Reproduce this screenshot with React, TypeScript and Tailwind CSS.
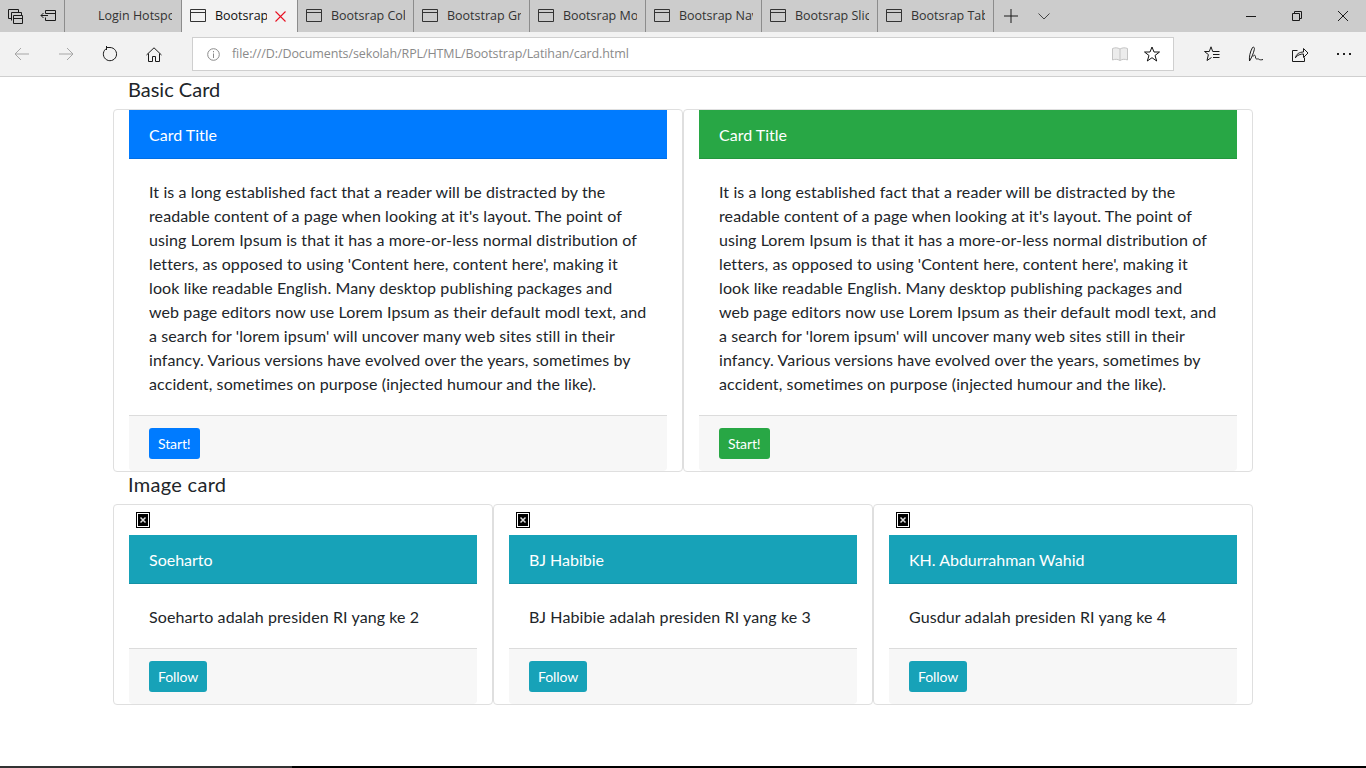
import React from 'react';

const bodyLines = [
  'It is a long established fact that a reader will be distracted by the',
  "readable content of a page when looking at it's layout. The point of",
  'using Lorem Ipsum is that it has a more-or-less normal distribution of',
  "letters, as opposed to using 'Content here, content here', making it",
  'look like readable English. Many desktop publishing packages and',
  'web page editors now use Lorem Ipsum as their default modl text, and',
  "a search for 'lorem ipsum' will uncover many web sites still in their",
  'infancy. Various versions have evolved over the years, sometimes by',
  'accident, sometimes on purpose (injected humour and the like).',
];

const tabs = ['Bootsrap Col', 'Bootstrap Gr', 'Bootsrap Mo', 'Bootsrap Nav', 'Bootsrap Slic', 'Bootsrap Tab'];

const people = [
  { name: 'Soeharto', text: 'Soeharto adalah presiden RI yang ke 2' },
  { name: 'BJ Habibie', text: 'BJ Habibie adalah presiden RI yang ke 3' },
  { name: 'KH. Abdurrahman Wahid', text: 'Gusdur adalah presiden RI yang ke 4' },
];

function Icon({ children, w = 16, h = 16, color = '#1a1a1a' }: { children: React.ReactNode; w?: number; h?: number; color?: string }) {
  return (
    <svg width={w} height={h} viewBox={`0 0 ${w} ${h}`} fill="none" stroke={color} strokeWidth="1">
      {children}
    </svg>
  );
}

function TabIcon() {
  return (
    <Icon w={16} h={14} color="#333">
      <path d="M0.5 0.5h15v12h-15z M0.5 3.5h15" />
    </Icon>
  );
}

function Tab({ label }: { label: string }) {
  return (
    <div className="w-[116px] h-8 flex items-center pl-[8px] border-r border-[#8c8c8c] shrink-0">
      <TabIcon />
      <div className="ml-[9px] w-[74px] overflow-hidden whitespace-nowrap text-[12.5px] text-[#333]">{label}</div>
    </div>
  );
}

function Browser() {
  return (
    <div className="font-['Open_Sans',sans-serif]">
      <div className="h-8 bg-[#cccccc] flex items-center">
        <div className="w-8 flex justify-center">
          <Icon w={16} h={15}>
            <path d="M0.5 0.5h10v3M0.5 0.5v9h3 M3.5 3.5h10v3M3.5 3.5v8 M5.5 6.5h9v8h-9z M5.5 9.5h9" />
          </Icon>
        </div>
        <div className="w-8 flex justify-center">
          <Icon w={16} h={12}>
            <path d="M5.5 0.5h10v10h-10v-3 M5.5 3.5v-3 M5.5 3.5h10 M8 5.5h-7 M3.5 3l-2.5 2.5l2.5 2.5" />
          </Icon>
        </div>
        <div className="w-[118px] h-8 flex items-center border-x border-[#8c8c8c] pl-[33px] shrink-0">
          <div className="w-[74px] overflow-hidden whitespace-nowrap text-[12.5px] text-[#333]">Login Hotspot</div>
        </div>
        <div className="w-[116px] h-8 flex items-center pl-[8px] bg-[#f2f2f2] border-r border-[#8c8c8c] shrink-0">
          <TabIcon />
          <div className="ml-[9px] w-[52px] overflow-hidden whitespace-nowrap text-[12.5px] text-[#111]">Bootsrap</div>
          <svg className="ml-[8px]" width="11" height="11" viewBox="0 0 11 11" stroke="#e81123" strokeWidth="1.1">
            <path d="M0.5 0.5l10 10M10.5 0.5l-10 10" />
          </svg>
        </div>
        {tabs.map((t) => (
          <Tab key={t} label={t} />
        ))}
        <div className="w-[34px] flex justify-center">
          <Icon w={14} h={14}>
            <path d="M7 0v14M0 7h14" />
          </Icon>
        </div>
        <div className="w-[32px] flex justify-center">
          <Icon w={12} h={7} color="#444">
            <path d="M0.5 0.5l5.5 5.5l5.5-5.5" />
          </Icon>
        </div>
        <div className="ml-auto flex">
          <div className="w-[46px] flex justify-center">
            <Icon w={10} h={10}>
              <path d="M0 5.5h10" />
            </Icon>
          </div>
          <div className="w-[46px] flex justify-center">
            <Icon w={10} h={10}>
              <path d="M0.5 2.5h7v7h-7z M2.5 2.5v-2h7v7h-2" />
            </Icon>
          </div>
          <div className="w-[46px] flex justify-center">
            <Icon w={10} h={10}>
              <path d="M0 0l10 10M10 0l-10 10" />
            </Icon>
          </div>
        </div>
      </div>
      <div className="h-[45px] bg-[#f2f2f2] border-b border-[#cfcfcf] flex items-center">
        <div className="w-11 flex justify-center">
          <Icon w={16} h={14} color="#a6a6a6">
            <path d="M15 7H1M7 1L1 7l6 6" />
          </Icon>
        </div>
        <div className="w-11 flex justify-center">
          <Icon w={16} h={14} color="#a6a6a6">
            <path d="M1 7h14M9 1l6 6l-6 6" />
          </Icon>
        </div>
        <div className="w-11 flex justify-center">
          <Icon w={16} h={16}>
            <path d="M5 2.2A6.6 6.6 0 1 0 8 1.5H4.5M4.5 0v4" />
          </Icon>
        </div>
        <div className="w-11 flex justify-center">
          <Icon w={16} h={15}>
            <path d="M0.5 8L8 0.8L15.5 8 M2.5 6.5v8h4v-5h3v5h4v-8" />
          </Icon>
        </div>
        <div className="ml-4 w-[982px] h-[34px] bg-white border border-[#cfcfcf] flex items-center pl-[14px] pr-[13px]">
          <Icon w={13} h={13} color="#8a8a8a">
            <circle cx="6.5" cy="6.5" r="5.8" />
            <path d="M6.5 5.5v4.5M6.5 3v1.3" />
          </Icon>
          <div className="ml-[12px] pt-px text-[12.5px] tracking-[-0.1px] text-[#8a8a8a] whitespace-nowrap">file:///D:/Documents/sekolah/RPL/HTML/Bootstrap/Latihan/card.html</div>
          <div className="ml-auto flex items-center gap-[16px]">
            <Icon w={16} h={15} color="#c4c4c4">
              <path fill="#ececec" d="M0.5 1.500c2.500-1 5-1 7.500 0.500c2.500-1.500 5-1.500 7.500-0.500v11.500c-2.500-1-5-1-7.500 0.500c-2.500-1.500-5-1.500-7.500-0.500z M8 2v11.500" />
            </Icon>
            <Icon w={16} h={16} color="#111">
              <path d="M8 1l2 5h5.500l-4.500 3.500l1.700 5.500l-4.700-3.300l-4.700 3.300l1.700-5.500l-4.500-3.500h5.500z" />
            </Icon>
          </div>
        </div>
        <div className="ml-4 w-11 flex justify-center">
          <Icon w={16} h={16}>
            <path d="M7 0.800L8.700 5.500H15.500M7 0.800L5.300 5.500H0.500L4.400 8.600L3 14.500L7.500 11.500M9 8.500h6.500M9 11.500h6.500" />
          </Icon>
        </div>
        <div className="w-11 flex justify-center">
          <Icon w={16} h={16}>
            <path d="M1.500 15C1 11 2 6 4.500 1.500C6 0.500 6.800 2 6.300 3.500C5.500 7 4 11 1.500 15Z M5 10.500C6 8.500 7.500 9 7.500 11C7.500 14 9.500 12.500 10.500 13C11.500 14 13.500 14 15 13.500" />
          </Icon>
        </div>
        <div className="w-11 flex justify-center">
          <Icon w={16} h={15}>
            <path d="M5.500 3.500h-5v11h12v-4 M3.500 11c0.500-4 4-6 8-6v-3.500l4.500 4.500l-4.500 4.500v-3.500c-3 0-6 1-8 3.500z" />
          </Icon>
        </div>
        <div className="w-11 flex justify-center gap-[4px]">
          <div className="w-[2px] h-[2px] bg-[#222]" />
          <div className="w-[2px] h-[2px] bg-[#222]" />
          <div className="w-[2px] h-[2px] bg-[#222]" />
        </div>
      </div>
    </div>
  );
}

function CardHeader({ color, children }: { color: string; children: React.ReactNode }) {
  return <div className={`${color} h-[49px] px-5 pt-px flex items-center text-white border-b border-black/10`}>{children}</div>;
}

function CardFooter({ color, children }: { color: string; children: React.ReactNode }) {
  return (
    <div className="bg-[#f7f7f7] border-t border-[#dcdcdc] h-[56px] px-5 pt-3 rounded-b-[4px]">
      <div className={`${color} inline-flex h-[31px] px-[9px] items-center text-sm tracking-[-0.1px] text-white rounded-[3px]`}>{children}</div>
    </div>
  );
}

function BasicCard({ title, color }: { title: string; color: string }) {
  return (
    <div className="flex-1 min-w-0 border border-[#dfdfdf] rounded-[4px] px-[15px] bg-white">
      <CardHeader color={color}>{title}</CardHeader>
      <div className="px-5 pt-[21px] leading-6 h-[256px] tracking-[0.1px]">
        {bodyLines.map((l) => (
          <div key={l} className="whitespace-nowrap">{l}</div>
        ))}
      </div>
      <CardFooter color={color}>Start!</CardFooter>
    </div>
  );
}

function BrokenImage() {
  return (
    <div className="h-[30px] pt-[7px] pl-[7px]">
      <svg width="14" height="16" viewBox="0 0 14 16">
        <rect x="0.5" y="0.500" width="13" height="15" fill="#fff" stroke="#000" />
        <rect x="2" y="2" width="10" height="12" fill="#000" />
        <path d="M4.500 5.500l5 5M9.500 5.500l-5 5" stroke="#ddd" strokeWidth="1.500" />
      </svg>
    </div>
  );
}

export default function App() {
  return (
    <div className="h-screen flex flex-col overflow-hidden bg-white text-[#212529] font-['Lato',sans-serif] text-base">
      <Browser />
      <main className="flex-1 w-[1140px] mx-auto">
        <h5 className="px-[15px] text-[20px] leading-6 mb-2">Basic Card</h5>
        <div className="flex">
          <BasicCard title="Card Title" color="bg-[#007bff]" />
          <BasicCard title="Card Title" color="bg-[#28a745]" />
        </div>
        <h5 className="px-[15px] text-[20px] leading-6 mb-2 tracking-[0.3px]">Image card</h5>
        <div className="flex">
          {people.map((p) => (
            <div key={p.name} className="flex-1 min-w-0 border border-[#dfdfdf] rounded-[4px] px-[15px] bg-white">
              <BrokenImage />
              <CardHeader color="bg-[#17a2b8]">{p.name}</CardHeader>
              <div className="h-[64px] px-5 pt-[21px] leading-6 tracking-[0.1px]">{p.text}</div>
              <CardFooter color="bg-[#17a2b8]">Follow</CardFooter>
            </div>
          ))}
        </div>
      </main>
      <div className="h-[2px] flex shrink-0">
        <div className="w-[292px] bg-[#333]" />
        <div className="flex-1 bg-black" />
      </div>
    </div>
  );
}
